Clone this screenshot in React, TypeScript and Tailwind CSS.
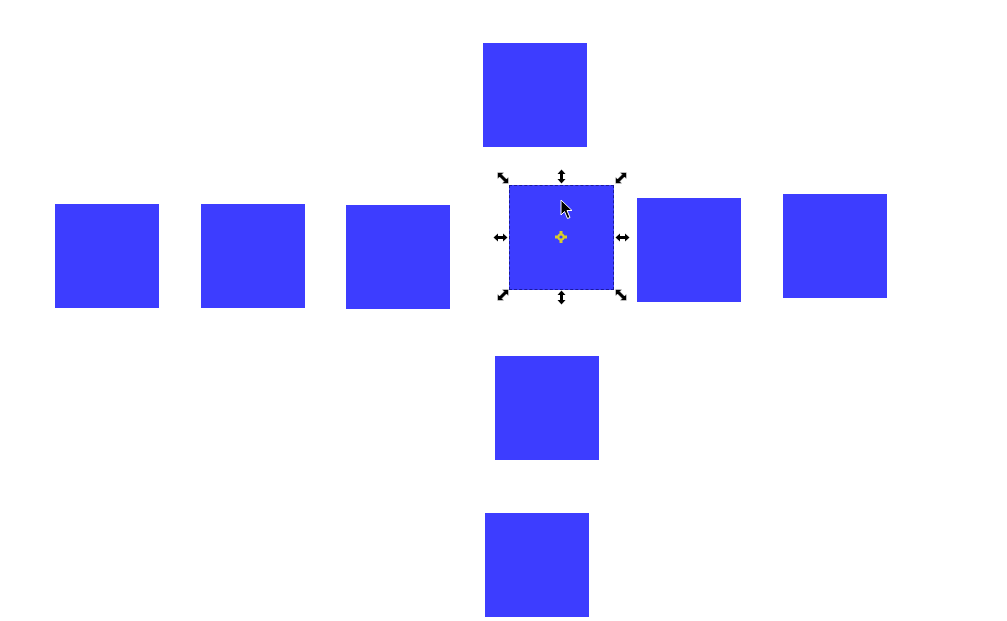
import React from "react";

const squares: { x: number; y: number }[] = [
  { x: 483, y: 43 },
  { x: 55, y: 204 },
  { x: 201, y: 204 },
  { x: 346, y: 205 },
  { x: 637, y: 198 },
  { x: 783, y: 194 },
  { x: 495, y: 356 },
  { x: 485, y: 513 },
];

function DiagArrow({ x, y, flip }: { x: number; y: number; flip?: boolean }) {
  return (
    <svg
      className="absolute"
      style={{ left: x, top: y, transform: flip ? "scaleX(-1)" : undefined }}
      width="14"
      height="14"
      viewBox="0 0 14 14"
    >
      <path
        d="M1.5 1.5 L8 1.5 L6 3.5 L10.5 8 L12.5 6 L12.5 12.5 L6 12.5 L8 10.5 L3.5 6 L1.5 8 Z"
        fill="#000"
        stroke="#ffffff"
        strokeOpacity="0.6"
        strokeWidth="0.8"
        strokeLinejoin="round"
      />
    </svg>
  );
}

function VArrow({ x, y }: { x: number; y: number }) {
  return (
    <svg className="absolute" style={{ left: x, top: y }} width="11" height="15" viewBox="0 0 11 15">
      <path d="M5.5 0.5 L9.5 5 L7 5 L7 10 L9.5 10 L5.5 14.5 L1.5 10 L4 10 L4 5 L1.5 5 Z" fill="#000" />
    </svg>
  );
}

function HArrow({ x, y }: { x: number; y: number }) {
  return (
    <svg className="absolute" style={{ left: x, top: y }} width="15" height="11" viewBox="0 0 15 11">
      <path d="M0.5 5.5 L5 1.5 L5 4 L10 4 L10 1.5 L14.5 5.5 L10 9.5 L10 7 L5 7 L5 9.5 Z" fill="#000" />
    </svg>
  );
}

export default function App() {
  return (
    <div className="relative w-[1007px] h-[621px] bg-white overflow-hidden">
      {squares.map((s, i) => (
        <div
          key={i}
          className="absolute w-[104px] h-[104px] bg-[#3d3dff]"
          style={{ left: s.x, top: s.y }}
        />
      ))}
      {/* selected square */}
      <div className="absolute left-[509px] top-[185px] w-[105px] h-[105px] bg-[#3d3dff] border border-dashed border-[#1a1a9a]" />

      <DiagArrow x={496} y={171} />
      <DiagArrow x={614} y={171} flip />
      <DiagArrow x={496} y={288} flip />
      <DiagArrow x={614} y={288} />
      <VArrow x={556} y={169} />
      <VArrow x={556} y={290} />
      <HArrow x={493} y={232} />
      <HArrow x={615} y={232} />

      {/* rotation center */}
      <svg className="absolute left-[554px] top-[230px]" width="14" height="14" viewBox="0 0 14 14">
        <path d="M5.5 1 L8.5 1 L8.5 3.5 A3.5 3.5 0 0 1 10.5 5.5 L13 5.5 L13 8.5 L10.5 8.5 A3.5 3.5 0 0 1 8.5 10.5 L8.5 13 L5.5 13 L5.5 10.5 A3.5 3.5 0 0 1 3.5 8.5 L1 8.5 L1 5.5 L3.5 5.5 A3.5 3.5 0 0 1 5.5 3.5 Z" fill="#d8cc2a" />
        <circle cx="7" cy="7" r="1.6" fill="#3d3dff" />
      </svg>

      {/* cursor */}
      <svg className="absolute left-[560px] top-[199px]" width="16" height="22" viewBox="0 0 16 22">
        <path d="M1 1 L1 16 L4.5 12.5 L7.5 19.5 L10 18.5 L7 11.5 L12 11.5 Z" fill="#000" stroke="#fff" strokeWidth="1" strokeLinejoin="round" />
      </svg>
    </div>
  );
}
